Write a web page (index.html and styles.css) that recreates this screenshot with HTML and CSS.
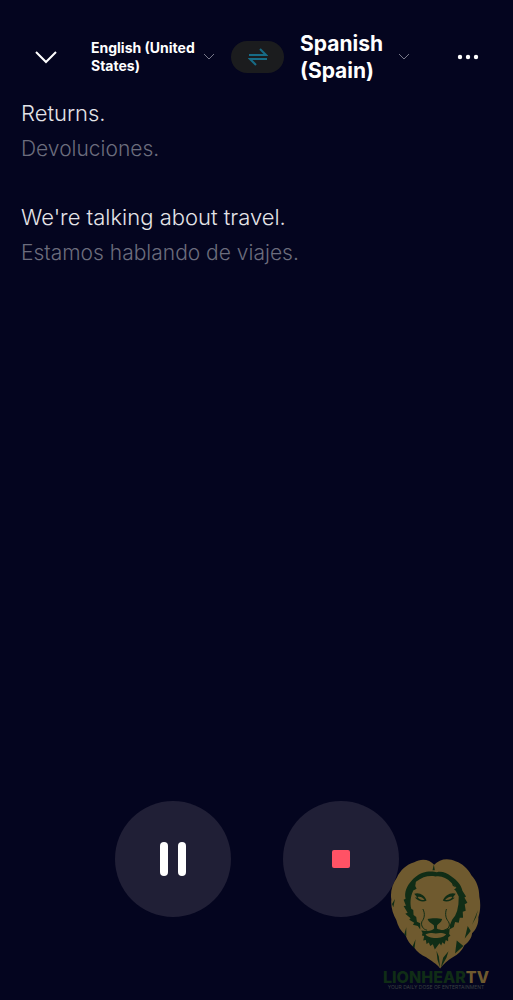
FILE: index.html
```html
<!DOCTYPE html>
<html lang="en">
<head>
    <meta charset="UTF-8">
    <meta name="viewport" content="width=device-width, initial-scale=1.0">
    <title>Live Translation</title>

    <link rel="stylesheet" href="styles.css">
</head>
<body>

<header class="topbar">
    <button class="icon-btn" type="button" aria-label="Close">
        <svg width="24" height="14" viewBox="0 0 24 14"><path d="M2 2l10 10L22 2"/></svg>
    </button>

    <div class="languages">
        <button class="language source" type="button" aria-haspopup="listbox">
            <span>English (United States)</span>
            <svg width="12" height="8" viewBox="0 0 12 8"><path d="M1 1l5 5 5-5"/></svg>
        </button>
        <button class="swap-btn" type="button" aria-label="Swap languages">
            <svg width="20" height="18" viewBox="0 0 20 18"><path d="M1 7h17L12 1M19 11H2l6 6"/></svg>
        </button>
        <button class="language target" type="button" aria-haspopup="listbox">
            <span>Spanish (Spain)</span>
            <svg width="12" height="8" viewBox="0 0 12 8"><path d="M1 1l5 5 5-5"/></svg>
        </button>
    </div>

    <button class="icon-btn more" type="button" aria-label="More options">
        <svg width="22" height="6" viewBox="0 0 22 6"><circle cx="3" cy="3" r="2.2"/><circle cx="11" cy="3" r="2.2"/><circle cx="19" cy="3" r="2.2"/></svg>
    </button>
</header>

<main class="transcript">
    <div class="phrase">
        <p>Returns.</p>
        <p class="translation" lang="es">Devoluciones.</p>
    </div>
    <div class="phrase">
        <p>We're talking about travel.</p>
        <p class="translation" lang="es">Estamos hablando de viajes.</p>
    </div>
</main>

<footer class="controls">
    <button class="round-btn" type="button" aria-label="Pause">
        <svg width="26" height="34" viewBox="0 0 26 34" fill="#fff"><rect width="8" height="34" rx="4"/><rect x="18" width="8" height="34" rx="4"/></svg>
    </button>
    <button class="round-btn" type="button" aria-label="Stop">
        <svg width="18" height="18" viewBox="0 0 18 18" fill="#ff5265"><rect width="18" height="18" rx="2"/></svg>
    </button>
</footer>

<div class="watermark">
    <svg class="lion" viewBox="30 22 280 336">
        <!-- Mane -->
        <path fill="#6f5a2f" d="M166 42C152 24 126 22 106 34C82 41 64 58 54 80C40 100 33 124 37 146C35 170 42 192 52 208C56 226 66 242 80 254C85 270 94 282 105 290C114 304 128 314 142 320C156 330 174 340 184 354C194 340 208 328 222 320C238 312 250 300 257 284C270 275 279 262 280 248C293 236 300 218 299 200C306 180 306 156 302 138C302 112 294 90 278 73C266 52 250 38 232 32C208 20 182 24 166 42Z"/>
        <!-- Shadow between mane and face -->
        <path fill="#102d16" d="M124 237L117 226L102 222L106 216L91 207L95 203L79 189L86 186L74 166L81 165L74 147L80 144C75 125 84 105 98 90C112 74 128 66 143 63C158 60 168 63 174 64C187 60 204 65 218 77C235 88 248 103 251 120L262 137L257 140L266 156L258 161L261 180L252 183L253 201L243 201L240 216L229 214L225 229L213 236L213 224L220 207L229 195L235 181L239 161L240 137L231 120L226 116L233 111L217 95C203 81 188 74 170 77C151 73 132 77 111 93L109 106L113 114L103 119C94 139 93 157 97 174L103 178L104 193L112 199L114 213L124 218Z"/>
        <!-- Eyes -->
        <path fill="#102d16" d="M106 129C120 123 138 133 143 149C135 155 119 153 108 140L115 140ZM231 129C217 123 199 133 192 149C201 156 217 152 228 141L222 140Z"/>
        <path fill="#6f5a2f" d="M116 139C123 136 131 140 137 147C127 149 120 146 116 139ZM221 139C213 136 205 140 199 148C209 149 217 146 221 139Z"/>
        <!-- Nose, muzzle and beard -->
        <path fill="#102d16" d="M146 205C157 202 180 202 190 205C188 215 179 219 175 224L174 234C183 239 195 240 205 236L213 232L211 250L215 255L208 261L208 272L201 268L197 281L191 275L187 285L182 278L168 297L162 281L154 286L150 276L143 280L141 268L133 270L136 256L129 255L131 247L127 240L140 241C152 242 161 240 166 234L165 224C157 217 149 214 146 205Z"/>
        <path fill="#6f5a2f" d="M140 251C153 246 163 246 171 249C181 246 193 247 202 251C195 265 149 267 140 251Z"/>
        <path class="lion-line" d="M132 175C140 190 136 204 129 213C125 225 133 237 145 239M203 175C198 190 201 204 209 213C216 226 209 235 197 238"/>
        <!-- Strands of the mane -->
        <path fill="#102d16" d="M161 58L165 41L168 58ZM39 160L48 145L43 170ZM76 252L82 230L82 256ZM101 288L110 266L107 292ZM298 178L292 200L280 222ZM267 226L276 241L258 264ZM234 270L254 286L229 309ZM173 301L180 318L184 352L176 328ZM186 352L193 322L209 302L203 322ZM217 89L230 110L222 105Z"/>
    </svg>
    <div class="brand">LIONHEAR<span>TV</span></div>
    <div class="tagline">YOUR DAILY DOSE OF ENTERTAINMENT</div>
</div>

</body>
</html>
```

FILE: styles.css
```css
* {
    margin: 0;
    padding: 0;
    box-sizing: border-box;
}

body {
    position: relative;
    display: flex;
    flex-direction: column;
    min-height: 100vh;
    background-color: #04051f;
    font-family: 'Inter', sans-serif;
    color: #fff;
}

button {
    border: none;
    background: none;
    color: inherit;
    font-family: inherit;
    cursor: pointer;
}

svg {
    display: block;
    flex-shrink: 0;
}

/* Top bar */
.topbar {
    display: flex;
    justify-content: space-between;
    align-items: center;
    padding: 30px 34px 0;
}

.icon-btn svg {
    fill: none;
    stroke: #fff;
    stroke-width: 2;
}

.icon-btn.more svg {
    fill: #fff;
    stroke: none;
}

.languages {
    display: flex;
    align-items: center;
    gap: 16px;
    margin-right: 14px;
}

.language {
    display: flex;
    align-items: center;
    gap: 4px;
    font-weight: 700;
    text-align: left;
}

.language svg {
    fill: none;
    stroke: #777889;
}

.source {
    font-size: 14px;
    line-height: 18px;
}

.source span {
    width: 108px;
}

.target {
    font-size: 21px;
    line-height: 27px;
}

.target span {
    width: 94px;
}

.swap-btn {
    display: flex;
    justify-content: center;
    align-items: center;
    width: 53px;
    height: 32px;
    border-radius: 16px;
    background-color: #1b1c1e;
}

.swap-btn svg {
    fill: none;
    stroke: #176b86;
    stroke-width: 2;
}

/* Transcript */
.transcript {
    flex: 1;
    padding: 12px 21px;
    font-size: 22px;
    font-weight: 300;
    line-height: 35px;
    color: #e4e4e8;
}

.phrase {
    margin-bottom: 34px;
}

.translation {
    font-size: 21px;
    color: #6c6d7d;
}

/* Playback buttons */
.controls {
    display: flex;
    justify-content: center;
    gap: 52px;
    padding-bottom: 83px;
}

.round-btn {
    display: flex;
    justify-content: center;
    align-items: center;
    width: 116px;
    height: 116px;
    border-radius: 50%;
    background-color: #201f36;
}

/* Channel logo over the corner of the screen */
.watermark {
    position: absolute;
    right: 24px;
    bottom: 10px;
    display: flex;
    flex-direction: column;
    align-items: center;
    white-space: nowrap;
    pointer-events: none;
}

.lion {
    width: 93px;
    height: 112px;
}

.brand {
    font-size: 16px;
    font-weight: 800;
    line-height: 14px;
    color: #102d16;
}

.brand span {
    color: #6f5a2f;
}

.tagline {
    font-size: 5px;
    line-height: 6px;
    color: #3a4042;
}

.lion-line {
    fill: none;
    stroke: #102d16;
    stroke-width: 3;
}
```
